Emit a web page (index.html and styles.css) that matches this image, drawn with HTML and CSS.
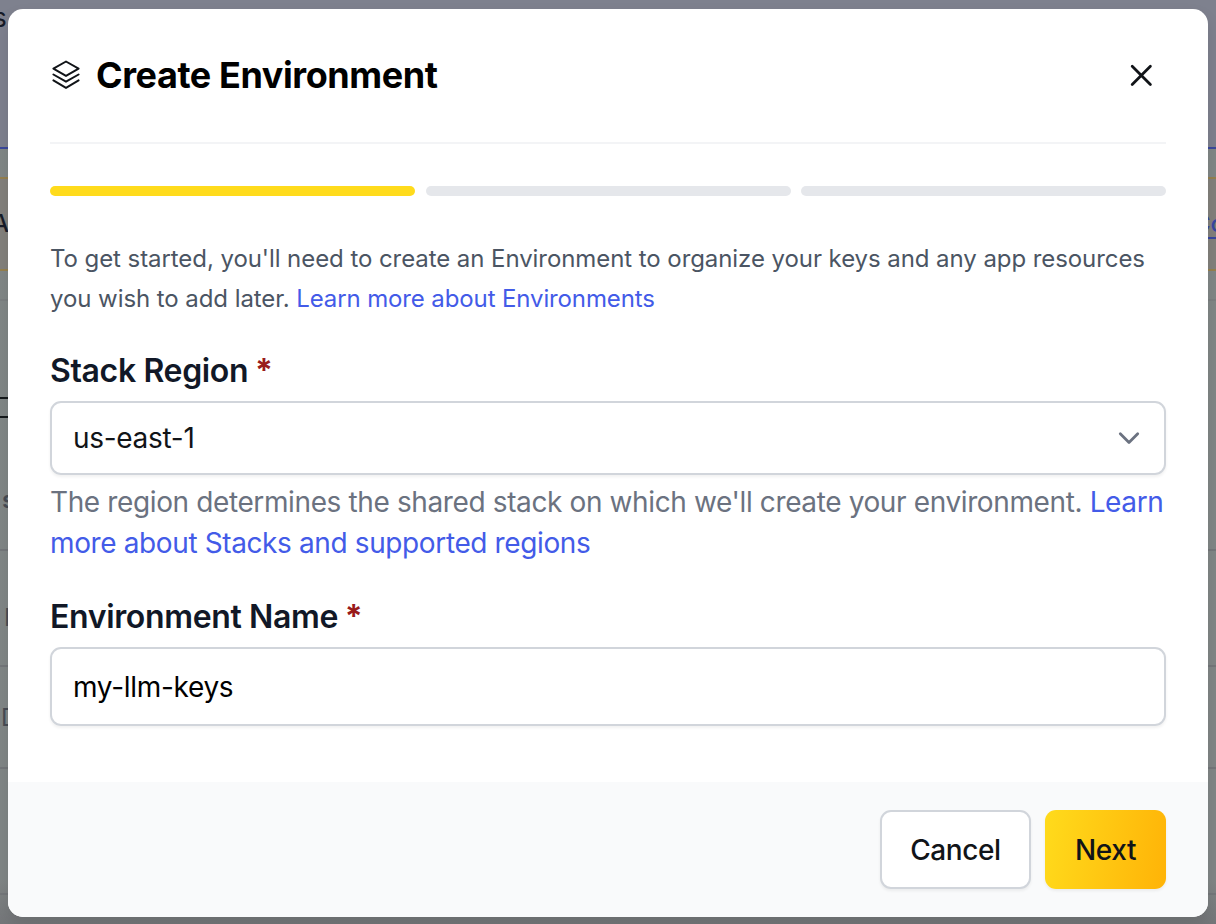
FILE: index.html
```html
<!DOCTYPE html>
<html lang="en">

<head>
    <meta charset="UTF-8">
    <meta name="viewport" content="width=device-width, initial-scale=1.0">
    <title>Create Environment</title>
    <link rel="stylesheet" href="styles.css">
</head>

<body>
    <div class="page">
        <div class="row hero"><span>s</span></div>
        <div class="row spacer"></div>
        <div class="row notice"><span>A</span><a class="notice-link">Co</a></div>
        <div class="row gap"></div>
        <div class="row tools"><div class="search"></div></div>
        <div class="row table-head"><span>s</span></div>
        <div class="row item-one"><span>I</span></div>
        <div class="row item-two"><span>D</span></div>
        <div class="row item-three"></div>
        <div class="row last"></div>
    </div>

    <div class="modal">
        <div class="content">
            <div class="header">
                <svg class="layers" width="32" height="32" viewBox="0 0 32 32">
                    <path d="M16 2.5L28.6 9.6L16 16.9L3.4 9.6Z" />
                    <path d="M3.4 15.5L16 22.7L28.6 15.5" />
                    <path d="M3.4 21.4L16 28.9L28.6 21.4" />
                </svg>
                <h1>Create Environment</h1>
                <svg class="close" width="24" height="24" viewBox="0 0 24 24">
                    <path d="M3.2 3.2L21.4 21.4M21.4 3.2L3.2 21.4" />
                </svg>
            </div>

            <div class="steps">
                <div class="step active"></div>
                <div class="step"></div>
                <div class="step"></div>
            </div>

            <p class="intro">To get started, you'll need to create an Environment to organize your keys and any app resources you wish to add later. <a>Learn more about Environments</a></p>

            <label class="region-label">Stack Region <b>*</b></label>
            <div class="field select">
                <span>us-east-1</span>
                <svg width="24" height="24" viewBox="0 0 24 24">
                    <path d="M3.3 7.8L12 16.5L20.7 7.8" />
                </svg>
            </div>
            <p class="hint">The region determines the shared stack on which we'll create your environment. <a>Learn more about Stacks and supported regions</a></p>

            <label class="name-label">Environment Name <b>*</b></label>
            <div class="field name"><span>my-llm-keys</span></div>
        </div>

        <div class="footer">
            <button class="cancel">Cancel</button>
            <button class="next">Next</button>
        </div>
    </div>
</body>

</html>
```
FILE: styles.css
```css
* {
    margin: 0;
    padding: 0;
    box-sizing: border-box;
}

body {
    height: 924px;
    overflow: hidden;
    font-family: Inter, "Liberation Sans", sans-serif;
    background: #828685;
}

/* dimmed page behind the dialog */
.page {
    height: 924px;
    background: linear-gradient(#818786 0, #818686 880px, #747679 924px);
    color: #484c54;
    font-size: 24px;
    line-height: 30px;
}

.row {
    display: flex;
    justify-content: space-between;
    border-bottom: 2px solid #74777a;
}

.hero {
    height: 149px;
    padding-top: 3px;
    background: #7e818e;
    border-bottom-color: #3b489c;
    color: #161a26;
    font-size: 26px;
}

.hero span {
    margin-left: -7px;
}

.spacer {
    height: 30px;
    border-bottom-color: #95804f;
}

.notice {
    height: 92px;
    padding-top: 30px;
    background: #83817c;
    border-bottom-color: #95804f;
    color: #171b28;
    font-weight: 500;
}

.notice span {
    margin-left: -8px;
}

.notice-link {
    margin-right: -9px;
    height: 30px;
    color: #3847a0;
    border-bottom: 2px solid #3847a0;
}

.gap {
    height: 30px;
    border-bottom-color: #7b7f80;
}

.tools {
    height: 250px;
    padding-top: 96px;
}

.search {
    width: 200px;
    height: 21px;
    border: 2px solid #15191b;
    border-left: 0;
}

.table-head {
    height: 0;
    border: 0;
}

.table-head span {
    margin: -66px 0 0 2px;
    font-weight: 600;
}

.item-one {
    height: 116px;
    padding-top: 52px;
}

.item-one span {
    margin-left: 4px;
}

.item-two {
    height: 102px;
    padding-top: 36px;
}

.item-two span {
    margin-left: 1px;
}

.item-three {
    height: 126px;
}

.last {
    border: 0;
}

/* dialog */
.modal {
    position: absolute;
    top: 9px;
    left: 8px;
    width: 1200px;
    height: 908px;
    border-radius: 15px;
    background: #fff;
    overflow: hidden;
    box-shadow: 0 8px 16px rgba(0, 0, 0, .1);
}

.content {
    height: 773px;
    padding: 0 42px;
}

.header {
    display: flex;
    align-items: center;
    height: 135px;
    padding: 0 13px 1px 0;
    border-bottom: 2px solid #f3f4f6;
}

svg {
    fill: none;
    stroke-linecap: round;
    stroke-linejoin: round;
}

.layers {
    stroke: #111418;
    stroke-width: 2;
}

h1 {
    margin-left: 14px;
    font-size: 36px;
    line-height: 48px;
    font-weight: 700;
    letter-spacing: -0.42px;
    color: #000;
}

.close {
    margin-left: auto;
    stroke: #111418;
    stroke-width: 2.8;
}

.steps {
    display: grid;
    grid-template-columns: repeat(3, 1fr);
    column-gap: 10.5px;
    margin-top: 42px;
}

.step {
    height: 10px;
    border-radius: 5px;
    background: #e5e7eb;
}

.step.active {
    background: #ffdb1c;
}

.intro {
    margin-top: 43px;
    font-size: 24px;
    line-height: 40px;
    letter-spacing: -0.07px;
    color: #4b5563;
}

.intro a {
    letter-spacing: -0.12px;
}

a {
    color: #435be8;
}

label {
    display: block;
    font-size: 32px;
    line-height: 42px;
    font-weight: 600;
    letter-spacing: -0.35px;
    color: #111827;
}

label b {
    margin-left: -1px;
    font-weight: 700;
    color: #991b1b;
}

.region-label {
    margin-top: 31px;
}

.field {
    display: flex;
    align-items: center;
    justify-content: space-between;
    padding: 0 23px 0 21px;
    border: 2px solid #d1d5db;
    border-radius: 11px;
    box-shadow: 0 2px 3px rgba(0, 0, 0, .06);
    font-size: 28px;
    letter-spacing: -0.3px;
    color: #000;
}

.select {
    height: 74px;
    margin-top: 9px;
    color: #111418;
}

.select svg {
    stroke: #6b7280;
    stroke-width: 2.8;
}

.hint {
    margin-top: 7px;
    font-size: 28px;
    line-height: 41px;
    letter-spacing: -0.38px;
    color: #6b7280;
}

.name-label {
    margin-top: 32px;
}

.name {
    height: 79px;
    margin-top: 9px;
}

.footer {
    display: flex;
    justify-content: flex-end;
    gap: 14px;
    height: 135px;
    padding: 28px 42px;
    background: #f9fafb;
}

button {
    height: 79px;
    border: 0;
    border-radius: 11px;
    font-family: inherit;
    font-size: 28px;
    font-weight: 500;
    letter-spacing: -0.4px;
    color: #111418;
    box-shadow: 0 2px 3px rgba(0, 0, 0, .06);
}

.cancel {
    width: 151px;
    border: 2px solid #d1d5db;
    background: #fff;
}

.next {
    width: 121px;
    background: linear-gradient(100deg, #ffdb1c, #ffb307);
}
```
